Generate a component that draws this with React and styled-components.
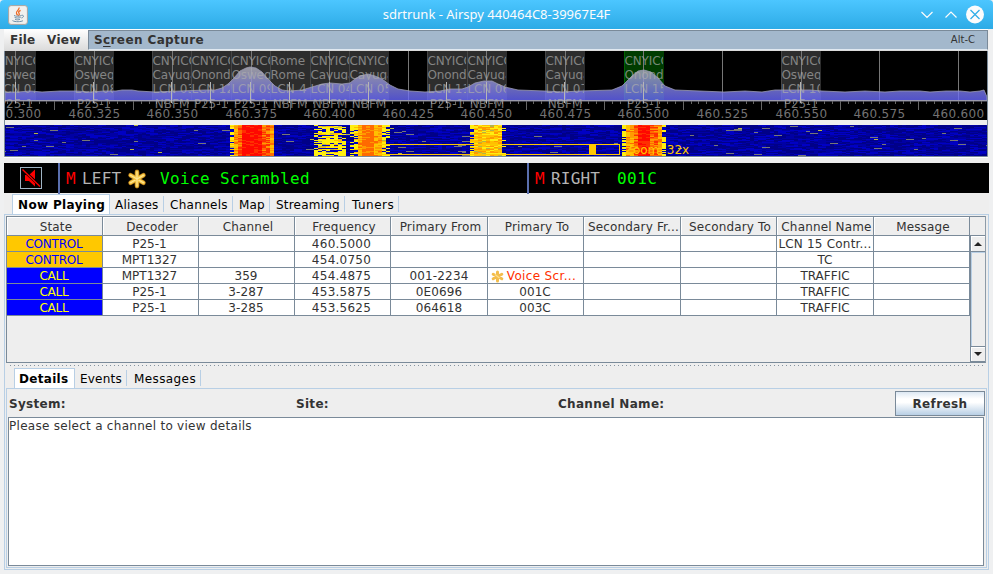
import React from "react";
import styled, { createGlobalStyle, css } from "styled-components";

const GlobalStyle = createGlobalStyle`
  * { box-sizing: border-box; }
  body { margin: 0; background: #eff0f1; overflow: hidden; }
`;

const LINE = "#7a8a99";
const PALE = "#b8cfe5";
const PANEL = "#eeeeee";

const Window = styled.div`
  width: 993px;
  height: 574px;
  display: flex;
  flex-direction: column;
  background: #eff0f1;
  color: #333;
  font: 12px/16px "DejaVu Sans", sans-serif;
  letter-spacing: 0.25px;
  white-space: pre;
`;

const TitleBar = styled.header`
  flex: none;
  height: 29px;
  display: grid;
  grid-template-columns: 60px 1fr 76px;
  align-items: center;
  background: linear-gradient(#4cc6ff, #2dabe6);
  border-radius: 4px 4px 0 0;
`;
const JavaSlot = styled.div`
  padding: 0 0 0 8px;
  height: 20px;
`;
const Title = styled.h1`
  margin: 0;
  padding: 0 0 2px 16px;
  text-align: center;
  color: #fcfcfc;
  font: 13px/20px "Noto Sans", sans-serif;
  letter-spacing: 0;
`;
const WindowButtons = styled.div`
  display: flex;
  height: 20px;
`;

const Client = styled.main`
  flex: 1;
  min-height: 0;
  margin: 0 4px 4px 4px;
  display: flex;
  flex-direction: column;
  background: ${PANEL};
`;

const MenuBar = styled.nav`
  flex: none;
  width: 984px;
  height: 22px;
  display: flex;
  background: linear-gradient(#fff, #dadada);
  font-weight: bold;
  line-height: 22px;
`;
const MenuItem = styled.span`
  width: ${(p) => p.$w}px;
  padding-left: ${(p) => p.$pad}px;
  letter-spacing: ${(p) => p.$ls}px;
`;
const ActiveMenu = styled.div`
  flex: 1;
  display: flex;
  justify-content: space-between;
  height: 20px;
  padding: 0 12px 0 5px;
  margin-top: 1px;
  line-height: 18px;
  letter-spacing: 0.39px;
  background: #a3b8cc;
  border: 1px solid ${LINE};
  border-bottom-color: #dfe8f0;
  u { text-underline-offset: 2px; }
`;
const Shortcut = styled.span`
  font-weight: normal;
  font-size: 10px;
  letter-spacing: 0;
`;

const Scope = styled.svg`
  flex: none;
  display: block;
  width: 984px;
  height: 107px;
  text { font-family: "DejaVu Sans", sans-serif; font-size: 12px; }
`;

const AudioBar = styled.section`
  flex: none;
  width: 985px;
  height: 30px;
  margin-top: 5px;
  display: grid;
  grid-template-columns: 54px 469px 1fr;
  background: #000;
  font: 16px/30px "DejaVu Sans Mono", monospace;
`;
const MuteCell = styled.div`
  padding: 4px 0 0 16px;
`;
const MuteButton = styled.div`
  width: 22px;
  height: 22px;
  border: 1px solid #9fb4c4;
  svg { display: block; }
`;
const AudioChannel = styled.div`
  display: flex;
  align-items: center;
  padding-left: 6px;
  border-left: 2px solid #5a6fae;
`;
const Mono = styled.span`
  padding-top: 1px;
  color: ${(p) => p.$color};
  width: ${(p) => p.$w}px;
  letter-spacing: ${(p) => p.$ls || 0}px;
`;
const Readout = styled(Mono)`
  padding-left: 13px;
`;

const TabPane = styled.section`
  display: flex;
  flex-direction: column;
  min-height: 0;
  flex: 1;
`;
const TabRow = styled.div`
  flex: none;
  height: ${(p) => p.$h}px;
  display: flex;
  align-items: flex-end;
  padding-left: 8px;
  color: #000;
`;
const Tab = styled.div`
  width: ${(p) => p.$w}px;
  height: 20px;
  padding-left: ${(p) => p.$pad || 5}px;
  line-height: 23px;
  letter-spacing: ${(p) => p.$ls || 0.2}px;
  display: flex;
  justify-content: space-between;
  &::after {
    content: "";
    width: 1px;
    height: 16px;
    margin-top: 2px;
    background: ${PALE};
  }
  ${(p) =>
    p.$active &&
    css`
      background: #fff;
      font-weight: bold;
      border: 1px solid ${PALE};
      border-bottom: 0;
      line-height: 21px;
      &::after { display: none; }
    `}
`;
const PaneBody = styled.div`
  flex: 1;
  min-height: 0;
  display: flex;
  flex-direction: column;
  border: 1px solid ${PALE};
  padding: 1px;
  background: ${PANEL};
`;

const TableFrame = styled.div`
  flex: none;
  width: 980px;
  height: 147px;
  display: grid;
  grid-template-columns: 963px 15px;
  border: 1px solid ${LINE};
  border-right-color: #8d9ba8;
`;
const Grid = styled.div`
  display: flex;
  flex-direction: column;
`;
const Row = styled.div`
  display: grid;
  grid-template-columns: 96px 96px 96px 96px 97px 96px 97px 96px 97px 96px;
  height: ${(p) => (p.$header ? 19 : 16)}px;
`;
const HeaderCell = styled.div`
  border-right: 1px solid ${LINE};
  border-bottom: 1px solid ${LINE};
  box-shadow: inset 1px 1px #fff;
  line-height: 20px;
  text-align: center;
  overflow: hidden;
  letter-spacing: 0.15px;
  padding-left: 3px;
`;
const tones = {
  control: ["#ffc800", "#0000ff"],
  call: ["#0000ff", "#ffff00"],
  alert: ["#fff", "#ff3000"],
};
const Cell = styled.div`
  display: flex;
  align-items: center;
  justify-content: center;
  gap: 3px;
  overflow: hidden;
  padding-top: 1px;
  padding-right: ${(p) => p.$shift || 0}px;
  line-height: 15px;
  border-right: 1px solid ${LINE};
  border-bottom: 1px solid ${LINE};
  letter-spacing: ${(p) => p.$ls}px;
  background: ${(p) => (p.$tone ? tones[p.$tone][0] : "#fff")};
  color: ${(p) => (p.$tone ? tones[p.$tone][1] : "#333")};
`;
const Scroller = styled.div`
  display: flex;
  flex-direction: column;
  padding-top: 18px;
`;
const Arrow = styled.div`
  height: ${(p) => p.$h}px;
  display: flex;
  align-items: center;
  justify-content: center;
  border: 1px solid ${LINE};
  border-right: 0;
  box-shadow: inset 1px 1px #fff;
`;
const Track = styled.div`
  flex: 1;
  border-left: 1px solid ${LINE};
  box-shadow: inset 1px 1px ${PALE};
`;
const SplitGrip = styled.div`
  flex: none;
  height: 5px;
  margin: 0 3px;
  background: radial-gradient(circle at 1.5px 2.5px, #8493a1 0.7px, transparent 0.8px) 0 0 / 4px 5px;
`;
const DetailPane = styled(TabPane)`
  width: 981px;
`;
const DetailHead = styled.div`
  flex: none;
  height: 27px;
  display: grid;
  grid-template-columns: 287px 262px 1fr 90px;
  padding-left: 1px;
  padding-top: 1px;
  font-weight: bold;
  line-height: 26px;
  letter-spacing: 0.3px;
`;
const Button = styled.button`
  height: 25px;
  padding: 0;
  border: 1px solid ${LINE};
  background: linear-gradient(#dde8f3, #fff 30%, #fff 45%, #b8cfe5);
  color: #333;
  font: bold 12px/24px "DejaVu Sans", sans-serif;
  letter-spacing: 0.4px;
`;
const TextArea = styled.div`
  flex: 1;
  width: 976px;
  border: 1px solid ${LINE};
  background: #fff;
  letter-spacing: 0.28px;
`;

/* ---- spectrum data ---- */
const CHANNELS = [
  [-4, "Oswego", "LCN 07", "P25-1"],
  [74, "Oswego", "LCN 08", "P25-1"],
  [152, "Cayuga", "LCN 03", "NBFM"],
  [191, "Onondaga", "LCN 12", "P25-1"],
  [231, "Oswego", "LCN 09", "P25-1"],
  [270, "Rome", "LCN 4", "NBFM"],
  [310, "Cayuga", "LCN 04", "NBFM"],
  [349, "Cayuga", "LCN 05", "NBFM"],
  [427, "Onondaga", "LCN 11", "P25-1"],
  [467, "Cayuga", "LCN 06", "NBFM"],
  [545, "Cayuga", "LCN 07", "NBFM"],
  [624, "Onondaga", "LCN 15", "P25-1"],
  [781, "Oswego", "LCN 10", "P25-1"],
];
const FREQS = Array.from({ length: 13 }, (_, i) => [
  Math.round(15 + i * 78.55),
  (460.3 + i * 0.025).toFixed(3),
]);

const TRACE =
  "M5 101V92L18 92 30 91 42 92 60 91 76 91 90 92 104 91 116 91 122 90 132 90 138 91 155 92 180 91 205 90 215 90 222 88 228 84 234 78 240 71 246 68 250 67 256 68 262 72 268 79 275 86 282 90 290 91 302 90 312 87 322 84 330 83 342 84 350 83 355 79 360 76 368 74 375 76 382 79 390 85 398 89 410 91 425 92 440 91 450 89 462 89 468 87 475 83 484 81 492 81 498 84 505 87 518 90 545 91 562 92 580 91 612 90 622 86 632 76 638 71 644 70 651 72 658 78 665 86 675 90 700 91 724 92 745 91 762 92 775 90 795 90 810 90 822 91 845 92 865 91 885 92 900 91 920 91 930 92 946 91 960 91 970 92 980 91 984 90 987 97V101Z";

const HOT = [
  [230, 234, 2], [234, 238, 3], [238, 242, 4], [242, 262, 5], [262, 269, 4], [269, 274, 3], [274, 276, 1],
  [315, 319, 1], [319, 342, 2], [342, 346, 1], [349, 353, 1], [353, 357, 2], [357, 361, 3], [361, 376, 3.6],
  [376, 384, 3], [384, 388, 2], [388, 391, 0.7], [472, 476, 2], [476, 503, 2.5], [503, 507, 0.6],
  [622, 626, 1.3], [626, 633, 3], [633, 637, 4], [637, 650, 5], [650, 652, 3], [652, 660, 4], [660, 664, 3], [664, 668, 1],
];
const HEAT = ["#000088", "#0000c4", "#777777", "#b4b446", "#ffee10", "#ffc000", "#ff9a00", "#ff6a00", "#ff3000", "#ff0800", "#0000a4"];

function buildWaterfall() {
  let seed = 20177;
  const rnd = () => {
    seed = (seed * 1664525 + 1013904223) >>> 0;
    return seed / 4294967296;
  };
  const paths = HEAT.map(() => "");
  for (let y = 125; y < 156; y++) {
    const fade = rnd();
    const cool = [];
    for (let x = 2; x < 987; x += 4) {
      const mid = x + 2;
      const zone = HOT.find((h) => mid >= h[0] && mid < h[1]);
      let c = 0;
      const r = rnd();
      if (zone) {
        const z = zone[2];
        if (z <= 1.3) c = r < z * 0.5 ? 4 : r < 0.7 ? 0 : 1;
        else if (z === 2) c = fade < 0.3 ? (r < 0.5 ? 1 : 4) : r < 0.55 ? 4 : r < 0.88 ? 5 : 3;
        else if (z === 2.5) c = r < 0.4 ? 5 : r < 0.7 ? 4 : r < 0.94 ? 6 : 3;
        else if (z === 3) c = r < 0.35 ? 5 : r < 0.8 ? 6 : 7;
        else if (z < 4) c = r < 0.25 ? 6 : 7;
        else if (z === 4) c = r < 0.4 ? 7 : r < 0.6 ? 6 : 8;
        else c = r < 0.35 ? 8 : 9;
      } else if (cool.length) {
        c = cool.pop();
      } else if (r < 0.17) {
        c = 1;
        if (rnd() < 0.6) cool.push(1);
        if (rnd() < 0.3) cool.push(1);
      } else if (r < 0.18) {
        c = 2;
        if (rnd() < 0.6) cool.push(2);
      } else if (r < 0.183) c = 3;
      else if (r < 0.42) {
        c = 10;
        if (rnd() < 0.5) cool.push(10);
      }
      if (c > 0) paths[c] += `M${x} ${y}h4v1h-4z`;
    }
  }
  return paths;
}
const WATERFALL = buildWaterfall();

function ChannelBlock({ data }) {
  const [x, ...lines] = data;
  const green = lines[1] === "LCN 15";
  return (
    <g>
      <rect x={x} y="51" width="40" height="50" fill={green ? "#003c00" : "#2d2d2d"} />
      <path d={`M${x + 0.5} 51V101`} stroke={green ? "#006400" : "#464646"} />
    </g>
  );
}

function ChannelText({ data }) {
  const [x, site, lcn, mode] = data;
  const site0 = site === "Rome" ? "Rome" : "CNYICC";
  const rows = [site0, site, lcn];
  return (
    <g fill="#adadad" opacity="0.68">
      {rows.map((t, i) => (
        <svg key={i} x={x} y={53 + i * 14} width="39" height="13">
          <text x="0.4" y="12" letterSpacing={site0 === "Rome" ? 0.2 : -0.1}>{t}</text>
        </svg>
      ))}
      <text x={x + 20} y="107.5" textAnchor="middle" letterSpacing="0">{mode}</text>
    </g>
  );
}

function Spectrum() {
  return (
    <Scope viewBox="4 51 984 107">
      <defs>
        <linearGradient id="power" gradientUnits="userSpaceOnUse" x1="0" y1="66" x2="0" y2="101">
          <stop offset="0" stopColor="#b4b4b4" stopOpacity="0.82" />
          <stop offset="1" stopColor="#6464ff" stopOpacity="0.8" />
        </linearGradient>
      </defs>
      <rect x="4" y="51" width="984" height="69" fill="#000" />
      {CHANNELS.map((c) => <ChannelBlock key={c[0]} data={c} />)}
      {FREQS.map(([x]) => <path key={x} d={`M${x + 0.5} 51V101`} stroke="#777" />)}
      <path d={TRACE} fill="url(#power)" stroke="#9a9ab4" strokeWidth="0.8" />
      <path d="M5 100.5H987" stroke="#9a9aaa" />
      <g stroke="#666">
        {Array.from({ length: 125 }, (_, i) => {
          const x = Math.round(15 + (i - 1) * 7.855) + 0.5;
          const five = (i - 1) % 5 === 0 && (i - 1) % 10 !== 0;
          return <path key={i} d={`M${x} 101V${five ? 110 : 104}`} />;
        })}
      </g>
      {CHANNELS.map((c) => (
        <path key={c[0]} d={`M${c[0] + 19.5} 82V103`} stroke="#b6b6b6" />
      ))}
      {CHANNELS.map((c) => <ChannelText key={c[0]} data={c} />)}
      <g fill="#737373" textAnchor="middle">
        {FREQS.map(([x, label]) => (
          <text key={x} x={x + 0.5} y="118" letterSpacing="0.35">{label}</text>
        ))}
      </g>
      <rect x="4" y="120" width="984" height="5" fill="#eee" />
      <rect x="4" y="125" width="984" height="31" fill={HEAT[0]} />
      <g shapeRendering="crispEdges">
        {WATERFALL.map((d, i) => (d ? <path key={i} d={d} fill={HEAT[i]} /> : null))}
      </g>
      <rect x="374.5" y="144.5" width="245" height="10" fill="none" stroke="#ffc800" />
      <rect x="589" y="145" width="7" height="9" fill="#ffc800" />
      <text x="625" y="154" fill="#ffc800" letterSpacing="-0.1">Zoom: 32x</text>
      <path d="M4.5 51V156.5H987.5V51" fill="none" stroke={LINE} />
      <path d="M4 157.5H988" stroke="#fff" />
    </Scope>
  );
}

function JavaIcon() {
  return (
    <svg width="20" height="20" viewBox="0 0 20 20" fill="none">
      <rect x="0.6" y="0.6" width="18.8" height="18.8" rx="2.5" fill="#f1f1ef" stroke="#aaa49f" />
      <path d="M11 2.5c1 2.6-4 3.8-2.5 6.2.6 1 1.2 1 1 1.8M12.6 5.3c-3 1.4-2 2.4-1.4 3.4.5.8-.3 1.6-.9 2" stroke="#ee6b25" strokeWidth="1.3" />
      <path d="M6 10.5c1.5 1 6 .9 7.5 0M6.6 12.4c1.8.9 4.3.8 6 0M7 14.2c1.5.9 3.8.8 5 0M4.5 15.6c2.5 1.6 9 1.3 10.5 0M13.6 10.3c2.8-.5 2.3 2.2-.2 2.7" stroke="#6d8fa8" />
    </svg>
  );
}

function Asterisk({ size }) {
  return (
    <svg width={size} height={size} viewBox="0 0 18 18">
      {[["#a96f14", 4.2], ["#f6c644", 3], ["#ffe694", 1]].map(([color, w]) => (
        <path key={color} d="M9 2.6V15.4M3.2 5.6L14.8 12.4M14.8 5.6L3.2 12.4" stroke={color} strokeWidth={w} strokeLinecap="round" />
      ))}
    </svg>
  );
}

function SmallBurst() {
  return (
    <svg width="13" height="13" viewBox="0 0 13 13">
      <path d="M6.5 2V11M2.2 4.2L10.8 8.8M10.8 4.2L2.2 8.8" stroke="#f3bd4c" strokeWidth="3" strokeLinecap="round" />
      <path d="M4 4.5L8.5 8" stroke="#ffe08c" strokeWidth="1.2" />
    </svg>
  );
}

const HEADERS = ["State", "Decoder", "Channel", "Frequency", "Primary From", "Primary To", "Secondary Fr...", "Secondary To", "Channel Name", "Message"];
const ROWS = [
  ["CONTROL", "P25-1", "", "460.5000", "", "", "", "", "LCN 15 Contr...", ""],
  ["CONTROL", "MPT1327", "", "454.0750", "", "", "", "", "TC", ""],
  ["CALL", "MPT1327", "359", "454.4875", "001-2234", "Voice Scr...", "", "", "TRAFFIC", ""],
  ["CALL", "P25-1", "3-287", "453.5875", "0E0696", "001C", "", "", "TRAFFIC", ""],
  ["CALL", "P25-1", "3-285", "453.5625", "064618", "003C", "", "", "TRAFFIC", ""],
];
const SPACING = [-0.2, 0, 0.1, 0.25, 0.15, 0.1, 0, 0, 0, 0];
const SHIFT = [1, 2, 1, 2, 0, 1, 0, 0, 0, 0];

function ChannelTable() {
  return (
    <TableFrame>
      <Grid>
        <Row $header>{HEADERS.map((h) => <HeaderCell key={h}>{h}</HeaderCell>)}</Row>
        {ROWS.map((row, r) => (
          <Row key={r}>
            {row.map((value, i) => {
              const voice = value === "Voice Scr...";
              const tone = i === 0 ? value.toLowerCase() : voice ? "alert" : undefined;
              const wide = value.startsWith("LCN") || voice;
              return (
                <Cell key={i} $tone={tone} $ls={voice ? 0.35 : wide ? 0.2 : SPACING[i]} $shift={voice ? 4 : SHIFT[i]}>
                  {voice && <SmallBurst />}
                  <span>{value}</span>
                </Cell>
              );
            })}
          </Row>
        ))}
      </Grid>
      <Scroller>
        <Arrow $h={17}><svg width="8" height="4"><path d="M0 4L4 0 8 4z" fill="#222" /></svg></Arrow>
        <Track />
        <Arrow $h={16}><svg width="8" height="4"><path d="M0 0H8L4 4z" fill="#222" /></svg></Arrow>
      </Scroller>
    </TableFrame>
  );
}

export default function App() {
  return (
    <Window>
      <GlobalStyle />
      <TitleBar>
        <JavaSlot><JavaIcon /></JavaSlot>
        <Title>sdrtrunk - Airspy 440464C8-39967E4F</Title>
        <WindowButtons>
          <svg width="76" height="20" fill="none" stroke="#fcfcfc" strokeWidth="1.2">
            <path d="M4.5 7L10 12.5 15.5 7M28.5 12.5L34 7 39.5 12.5" />
            <circle cx="58" cy="9.5" r="9" fill="#fcfcfc" stroke="none" />
            <path d="M53.5 5L62.5 14M62.5 5L53.5 14" stroke="#30aee8" strokeWidth="1.3" />
          </svg>
        </WindowButtons>
      </TitleBar>
      <Client>
        <MenuBar>
          <MenuItem $w={37} $pad={6} $ls={0.2}>File</MenuItem>
          <MenuItem $w={47} $pad={6} $ls={0.3}>View</MenuItem>
          <ActiveMenu>
            <span>S<u>c</u>reen Capture</span>
            <Shortcut>Alt-C</Shortcut>
          </ActiveMenu>
        </MenuBar>
        <Spectrum />
        <AudioBar>
          <MuteCell>
            <MuteButton>
              <svg width="20" height="20">
                <path d="M4 7H8L14 1.5V18.5L8 13H4z" fill="#f00" />
                <path d="M2 2L19 18" stroke="#000" strokeWidth="3" />
                <path d="M1.5 1.5L19 18.5" stroke="#f00" strokeWidth="1.4" />
              </svg>
            </MuteButton>
          </MuteCell>
          <AudioChannel>
            <Mono $color="#f00" $w={16}>M</Mono>
            <Mono $color="#b4b4b4" $w={45} $ls={0.2}>LEFT</Mono>
            <Asterisk size={20} />
            <Readout $color="#0f0" $w={200} $ls={0.37}>Voice Scrambled</Readout>
          </AudioChannel>
          <AudioChannel>
            <Mono $color="#f00" $w={16}>M</Mono>
            <Mono $color="#b4b4b4" $w={66} $ls={0.2}>RIGHT</Mono>
            <Mono $color="#0f0" $w={80} $ls={0.45}>001C</Mono>
          </AudioChannel>
        </AudioBar>
        <TabPane>
          <TabRow $h={21}>
            <Tab $active $w={98} $ls={0.35}>Now Playing</Tab>
            <Tab $w={54}>Aliases</Tab>
            <Tab $w={69} $pad={6} $ls={0.3}>Channels</Tab>
            <Tab $w={37} $pad={6}>Map</Tab>
            <Tab $w={75} $pad={6}>Streaming</Tab>
            <Tab $w={54} $pad={7} $ls={0.5}>Tuners</Tab>
          </TabRow>
          <PaneBody>
            <ChannelTable />
            <SplitGrip />
            <DetailPane>
              <TabRow $h={20}>
                <Tab $active $w={61} $ls={0.3} $pad={4}>Details</Tab>
                <Tab $w={52}>Events</Tab>
                <Tab $w={74} $pad={7} $ls={0.4}>Messages</Tab>
              </TabRow>
              <PaneBody>
                <DetailHead>
                  <span>System:</span>
                  <span>Site:</span>
                  <span>Channel Name:</span>
                  <Button>Refresh</Button>
                </DetailHead>
                <TextArea>Please select a channel to view details</TextArea>
              </PaneBody>
            </DetailPane>
          </PaneBody>
        </TabPane>
      </Client>
    </Window>
  );
}
